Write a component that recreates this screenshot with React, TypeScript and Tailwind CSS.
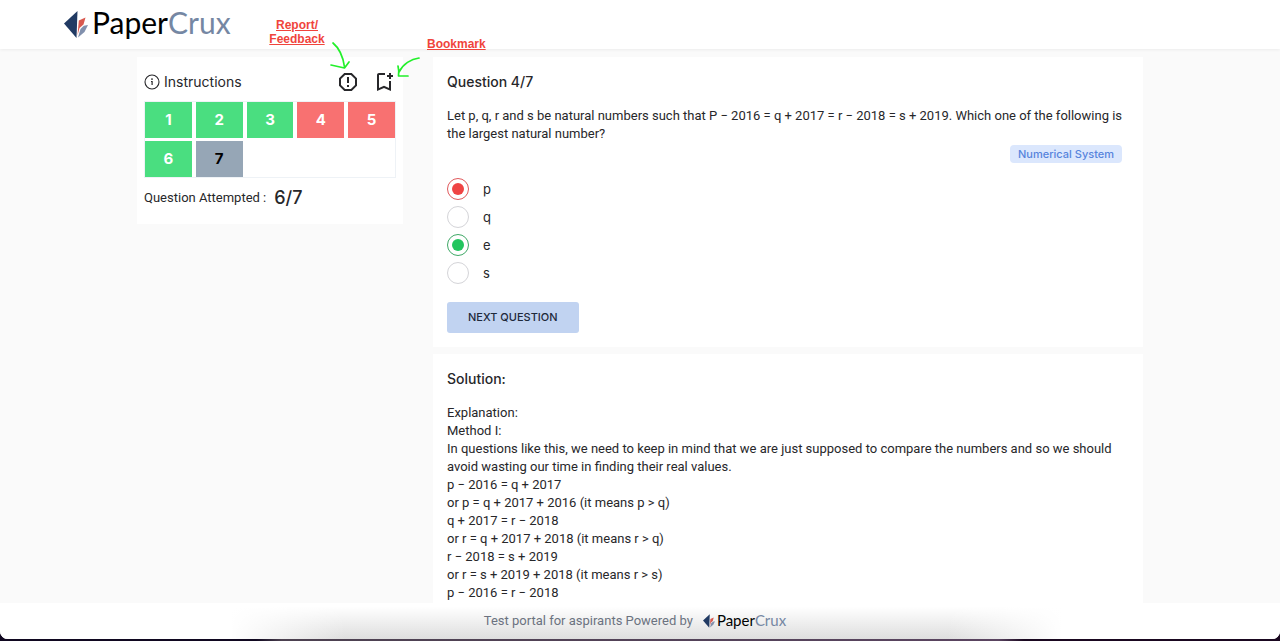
import React from "react";
import { MdOutlineBookmarkAdd, MdReportGmailerrorred } from "react-icons/md";

type Status = "correct" | "wrong" | "current";

const palette: Record<Status, string> = {
  correct: "bg-[#4ade80] text-white",
  wrong: "bg-[#f87171] text-white",
  current: "bg-[#96a6b6] text-black",
};

const questions: Status[] = ["correct", "correct", "correct", "wrong", "wrong", "correct", "current"];

const options = [
  { label: "p", ring: "border-[#e0595c] before:bg-[#ef4444]", picked: true },
  { label: "q", ring: "border-[#d4d4d8]", picked: false },
  { label: "e", ring: "border-[#3fa866] before:bg-[#22c55e]", picked: true },
  { label: "s", ring: "border-[#d4d4d8]", picked: false },
];

const solution = [
  "Explanation:",
  "Method I:",
  "In questions like this, we need to keep in mind that we are just supposed to compare the numbers and so we should avoid wasting our time in finding their real values.",
  "p − 2016 = q + 2017",
  "or p = q + 2017 + 2016 (it means p > q)",
  "q + 2017 = r − 2018",
  "or r = q + 2017 + 2018 (it means r > q)",
  "r − 2018 = s + 2019",
  "or r = s + 2019 + 2018 (it means r > s)",
  "p − 2016 = r − 2018",
];

function Mark({ className }: { className: string }) {
  return (
    <svg viewBox="0 0 24 27" className={className} aria-hidden="true">
      <path d="M0 12.500 13.500 0 12.500 27Z" fill="#213a63" />
      <path d="M14.800 9.500 21.500 6.500 19.500 13.500 15.500 17 13.500 24.500Z" fill="#d9594f" />
      <path d="M16.500 18 19.800 14.800 24 14 20.500 21 14 26.500Z" fill="#8190ad" />
    </svg>
  );
}

function InfoIcon({ className }: { className: string }) {
  return (
    <svg viewBox="0 0 16 16" className={className} fill="none" stroke="currentColor" aria-hidden="true">
      <circle cx="8" cy="8" r="7" strokeWidth="1.1" />
      <circle cx="8" cy="5.1" r="0.9" fill="currentColor" stroke="none" />
      <path d="M7 7.500H8.100V11" strokeWidth="1.2" />
    </svg>
  );
}

function Wordmark({ className }: { className: string }) {
  return (
    <span className={`font-['Lato',sans-serif] text-black ${className}`}>
      Paper<span className="text-[#7587a3]">Crux</span>
    </span>
  );
}

function Annotations() {
  return (
    <div className="pointer-events-none absolute inset-x-0 top-0 z-20 mx-auto h-24 max-w-[1006px] font-['Liberation_Sans',sans-serif] text-xs font-bold text-[#f0443c]">
      <p className="absolute top-[18px] left-[130px] w-[60px] text-center leading-[14px] underline">Report/ Feedback</p>
      <p className="absolute top-[37px] left-[290px] leading-[14px] underline">Bookmark</p>
      <svg
        viewBox="0 0 100 60"
        className="absolute top-[38px] left-[188px] h-[60px] w-[100px]"
        fill="none"
        stroke="#22f02a"
        strokeWidth="1.7"
        strokeLinecap="round"
        strokeLinejoin="round"
        aria-hidden="true"
      >
        <path d="M8 5C14 10 18 18 19.500 29M6 27 19.500 30 24 24" />
        <path d="M94 20C86 21 78 26 74 34M73 28C74 32 74 35 73.500 38L83 38" />
      </svg>
    </div>
  );
}

export default function App() {
  return (
    <div className="h-screen bg-[linear-gradient(to_right,#100820_20%,#4c4150_22%,#5a4460_78%,#1a0820_80%)] pb-0.5 font-['Inter',sans-serif] text-[#27272a]">
      <div className="relative flex h-full flex-col overflow-hidden rounded-b-lg bg-[#fafafa]">
        <header className="z-10 flex h-[49px] shrink-0 items-center bg-white px-16 shadow-[0_1px_3px_rgba(0,0,0,0.06)]">
          <a href="#" className="flex items-center gap-1" aria-label="PaperCrux">
            <Mark className="h-[27px] w-6" />
            <Wordmark className="pb-1.5 text-[30px] leading-10" />
          </a>
        </header>
        <Annotations />

        <main className="mx-auto flex min-h-0 w-full max-w-[1006px] flex-1 items-start gap-[30px] overflow-hidden pt-2">
          <aside className="w-[266px] shrink-0 bg-white px-[7px] pt-3 pb-3">
            <div className="flex h-[26px] items-center">
              <InfoIcon className="size-4" />
              <span className="ml-1 text-sm">Instructions</span>
              <button aria-label="Report" className="ml-auto">
                <MdReportGmailerrorred className="size-6" />
              </button>
              <button aria-label="Bookmark" className="ml-3">
                <MdOutlineBookmarkAdd className="size-6" />
              </button>
            </div>
            <div className="mt-1.5 grid grid-cols-5 gap-x-1 gap-y-[3px] border border-[#eef2f6]">
              {questions.map((status, i) => (
                <button key={i} className={`h-9 text-[15px] font-bold ${palette[status]}`}>
                  {i + 1}
                </button>
              ))}
            </div>
            <p className="mt-1.5 flex h-7 items-center gap-2 font-['Roboto',sans-serif] text-[13px]">
              Question Attempted : <span className="font-['Inter',sans-serif] text-lg font-medium">6/7</span>
            </p>
          </aside>

          <div className="flex min-w-0 flex-1 flex-col gap-[7px]">
            <section className="bg-white px-3.5 pt-4 pb-3.5">
              <h1 className="text-sm leading-[18px] font-medium">Question 4/7</h1>
              <p className="mt-4 font-['Roboto',sans-serif] text-[13px] leading-[18px]">
                Let p, q, r and s be natural numbers such that P − 2016 = q + 2017 = r − 2018 = s + 2019. Which one of the following is the largest natural number?
              </p>
              <div className="mt-0.5 flex justify-end pr-[7px]">
                <span className="rounded-sm bg-[#dbe7fd] px-2 text-[11px] leading-[18px] font-medium text-[#5784dc]">Numerical System</span>
              </div>
              <div className="mt-[15px] flex flex-col gap-1.5">
                {options.map(({ label, ring, picked }) => (
                  <label key={label} className="flex items-center gap-3.5 text-[13px] leading-[22px]">
                    <input
                      type="radio"
                      name={`option-${label}`}
                      defaultChecked={picked}
                      className={`grid size-[22px] appearance-none place-content-center rounded-full border bg-white before:size-3 before:rounded-full ${ring}`}
                    />
                    {label}
                  </label>
                ))}
              </div>
              <button className="mt-[18px] h-[31px] rounded-[3px] bg-[#c1d3f1] px-[21px] text-[11px] font-medium text-[#1e293b]">NEXT QUESTION</button>
            </section>

            <section className="bg-white px-3.5 pt-4 pb-8">
              <h2 className="text-sm leading-[18px] font-medium">Solution:</h2>
              <div className="mt-4 font-['Roboto',sans-serif] text-[13px] leading-[18px]">
                {solution.map((line) => (
                  <p key={line}>{line}</p>
                ))}
              </div>
            </section>
          </div>
        </main>

        <footer className="z-10 flex h-9 shrink-0 items-center justify-center gap-2.5 bg-[linear-gradient(to_right,white_18%,transparent_27%,transparent_74%,white_83%),linear-gradient(to_bottom,white_10%,#dedede)] pr-2.5 font-['Roboto',sans-serif] text-[13px] text-[#6b7280]">
          Test portal for aspirants Powered by
          <span className="flex items-center gap-0.5">
            <Mark className="h-3.5 w-3" />
            <Wordmark className="pb-0.5 text-[15px]" />
          </span>
        </footer>
      </div>
    </div>
  );
}
